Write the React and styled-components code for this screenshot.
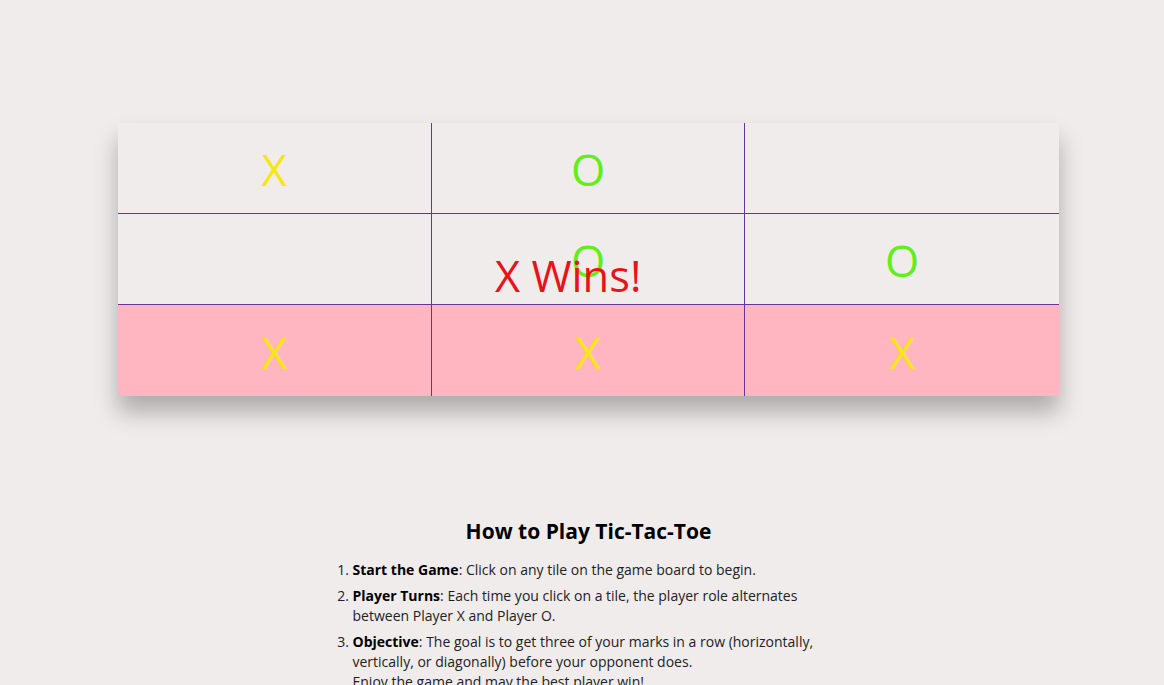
import React, { useState } from "react";
import styled, { createGlobalStyle } from "styled-components";

const Color = {
  page: "#f0ecec",
  line: "#663399",
  win: "#ffb6c1",
  x: "#f7e614",
  o: "#62ee18",
  banner: "#e8131a",
  text: "#222222",
};

const GlobalStyle = createGlobalStyle`
  body {
    margin: 0;
    background: ${Color.page};
    font-family: "Open Sans", "Noto Sans", sans-serif;
  }
`;

const Page = styled.div`
  display: flex;
  flex-direction: column;
  align-items: center;
  padding-top: 123px;
  padding-left: 13px;
`;

const BoardWrap = styled.div`
  position: relative;
  width: 941px;
`;

const Board = styled.div`
  display: grid;
  grid-template-columns: repeat(3, 1fr);
  grid-template-rows: repeat(3, 91px);
  box-shadow: 0 16px 22px rgba(0, 0, 0, 0.28);
`;

const Tile = styled.div`
  display: flex;
  align-items: center;
  justify-content: center;
  background: ${(p) => (p.$win ? Color.win : Color.page)};
  border-right: ${(p) => (p.$right ? `1px solid ${Color.line}` : "none")};
  border-bottom: ${(p) => (p.$bottom ? `1px solid ${Color.line}` : "none")};
  font-size: 44px;
  line-height: 1;
  color: ${(p) => (p.$mark === "X" ? Color.x : Color.o)};
  cursor: pointer;
  padding-top: 2px;
`;

const Banner = styled.div`
  position: absolute;
  left: 377px;
  top: 131px;
  font-size: 43.5px;
  line-height: 1;
  color: ${Color.banner};
  pointer-events: none;
`;

const Rules = styled.section`
  width: 500px;
  margin-top: 120px;
  color: ${Color.text};
`;

const Title = styled.h2`
  margin: 0 0 14px;
  text-align: center;
  font-size: 21px;
  font-weight: 700;
  color: #000;
  line-height: 30px;
`;

const Steps = styled.ol`
  margin: 0;
  padding-left: 14px;
  font-size: 14px;
  line-height: 20px;
`;

const Step = styled.li`
  margin-bottom: 6px;

  b {
    color: #000;
  }
`;

const initial = ["X", "O", "", "", "O", "O", "X", "X", "X"];
const winLine = [6, 7, 8];

const App = () => {
  const [tiles] = useState(initial);

  return (
    <>
      <GlobalStyle />
      <Page>
        <BoardWrap>
          <Board>
            {tiles.map((mark, i) => (
              <Tile
                key={i}
                $mark={mark}
                $win={winLine.includes(i)}
                $right={i % 3 !== 2}
                $bottom={i < 6}
              >
                {mark}
              </Tile>
            ))}
          </Board>
          <Banner>X Wins!</Banner>
        </BoardWrap>
        <Rules>
          <Title>How to Play Tic-Tac-Toe</Title>
          <Steps>
            <Step>
              <b>Start the Game</b>: Click on any tile on the game board to
              begin.
            </Step>
            <Step>
              <b>Player Turns</b>: Each time you click on a tile, the player
              role alternates between Player X and Player O.
            </Step>
            <Step>
              <b>Objective</b>: The goal is to get three of your marks in a row
              (horizontally, vertically, or diagonally) before your opponent
              does.
              <br />
              Enjoy the game and may the best player win!
            </Step>
          </Steps>
        </Rules>
      </Page>
    </>
  );
};

export default App;
